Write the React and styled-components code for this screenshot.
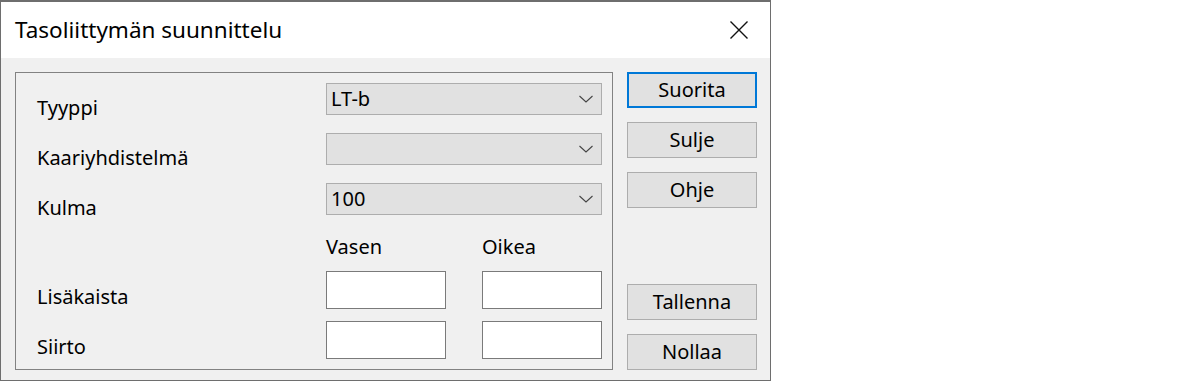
import React from "react";
import styled, { createGlobalStyle } from "styled-components";

const Global = createGlobalStyle`
  html, body { margin: 0; padding: 0; background: #ffffff; }
  body { font-family: "Noto Sans", "Open Sans", sans-serif; color: #000; }
  * { box-sizing: border-box; }
`;

const Window = styled.div`
  width: 771px;
  height: 381px;
  border: 1px solid #6e6e6e;
  border-top-width: 2px;
  display: flex;
  flex-direction: column;
  background: #f0f0f0;
`;

const TitleBar = styled.div`
  height: 56px;
  flex: none;
  background: #ffffff;
  display: flex;
  align-items: center;
  justify-content: space-between;
  padding-left: 14px;
  padding-right: 22px;
`;

const Title = styled.div`
  font-size: 22.5px;
  line-height: 30px;
  margin-top: -1px;
`;

const CloseIcon = styled.svg`
  width: 18px;
  height: 18px;
  display: block;
`;

const Body = styled.div`
  flex: 1;
  display: flex;
  gap: 14px;
  padding: 14px 13px 0 14px;
`;

const GroupBox = styled.div`
  width: 598px;
  height: 298px;
  border: 1px solid #828282;
  padding: 10px 9px 0 21px;
  display: flex;
  flex-direction: column;
`;

const Row = styled.div`
  display: grid;
  grid-template-columns: 289px 120px 36px 120px;
  height: ${(p) => p.$h}px;
  margin-top: ${(p) => p.$mt || 0}px;
`;

const Label = styled.div`
  font-size: 20px;
  line-height: 24px;
  margin-top: ${(p) => p.$off}px;
  white-space: nowrap;
`;

const Combo = styled.div`
  grid-column: 2 / 5;
  height: 32px;
  background: #e1e1e1;
  border: 1px solid #adadad;
  display: flex;
  align-items: center;
  justify-content: space-between;
  padding: 0 8px 0 4px;
  font-size: 20px;
  line-height: 24px;
`;

const Chevron = styled.svg`
  width: 14px;
  height: 8px;
  display: block;
`;

const Input = styled.div`
  grid-column: ${(p) => p.$col};
  height: 38px;
  background: #ffffff;
  border: 1px solid #7a7a7a;
`;

const ColHead = styled.div`
  grid-column: ${(p) => p.$col};
  font-size: 20px;
  line-height: 24px;
`;

const Buttons = styled.div`
  width: 130px;
  display: flex;
  flex-direction: column;
`;

const Button = styled.div`
  height: 36px;
  margin-top: ${(p) => p.$mt || 0}px;
  background: #e1e1e1;
  border: ${(p) => (p.$default ? "2px solid #0078d7" : "1px solid #adadad")};
  display: flex;
  align-items: center;
  justify-content: center;
  font-size: 20px;
  line-height: 24px;
`;

const ChevronIcon = () => (
  <Chevron viewBox="0 0 14 8">
    <path d="M0.5 1 L7 7 L13.5 1" fill="none" stroke="#444" strokeWidth="1.1" />
  </Chevron>
);

const ComboRow = ({ label, value, mt }) => (
  <Row $h={32} $mt={mt}>
    <Label $off={13}>{label}</Label>
    <Combo>
      <span>{value}</span>
      <ChevronIcon />
    </Combo>
  </Row>
);

const InputRow = ({ label, mt }) => (
  <Row $h={38} $mt={mt}>
    <Label $off={14}>{label}</Label>
    <Input $col="2" />
    <Input $col="4" />
  </Row>
);

export default function App() {
  return (
    <>
      <Global />
      <Window>
        <TitleBar>
          <Title>Tasoliittymän suunnittelu</Title>
          <CloseIcon viewBox="0 0 18 18">
            <path d="M0.5 0.5 L17.5 17.5 M17.5 0.5 L0.5 17.5" stroke="#111" strokeWidth="1.4" fill="none" />
          </CloseIcon>
        </TitleBar>
        <Body>
          <GroupBox>
            <ComboRow label="Tyyppi" value="LT-b" />
            <ComboRow label="Kaariyhdistelmä" value="" mt={18} />
            <ComboRow label="Kulma" value="100" mt={18} />
            <Row $h={24} $mt={20}>
              <ColHead $col="2">Vasen</ColHead>
              <ColHead $col="4">Oikea</ColHead>
            </Row>
            <InputRow label="Lisäkaista" mt={12} />
            <InputRow label="Siirto" mt={12} />
          </GroupBox>
          <Buttons>
            <Button $default>Suorita</Button>
            <Button $mt={14}>Sulje</Button>
            <Button $mt={14}>Ohje</Button>
            <Button $mt={76}>Tallenna</Button>
            <Button $mt={14}>Nollaa</Button>
          </Buttons>
        </Body>
      </Window>
    </>
  );
}
